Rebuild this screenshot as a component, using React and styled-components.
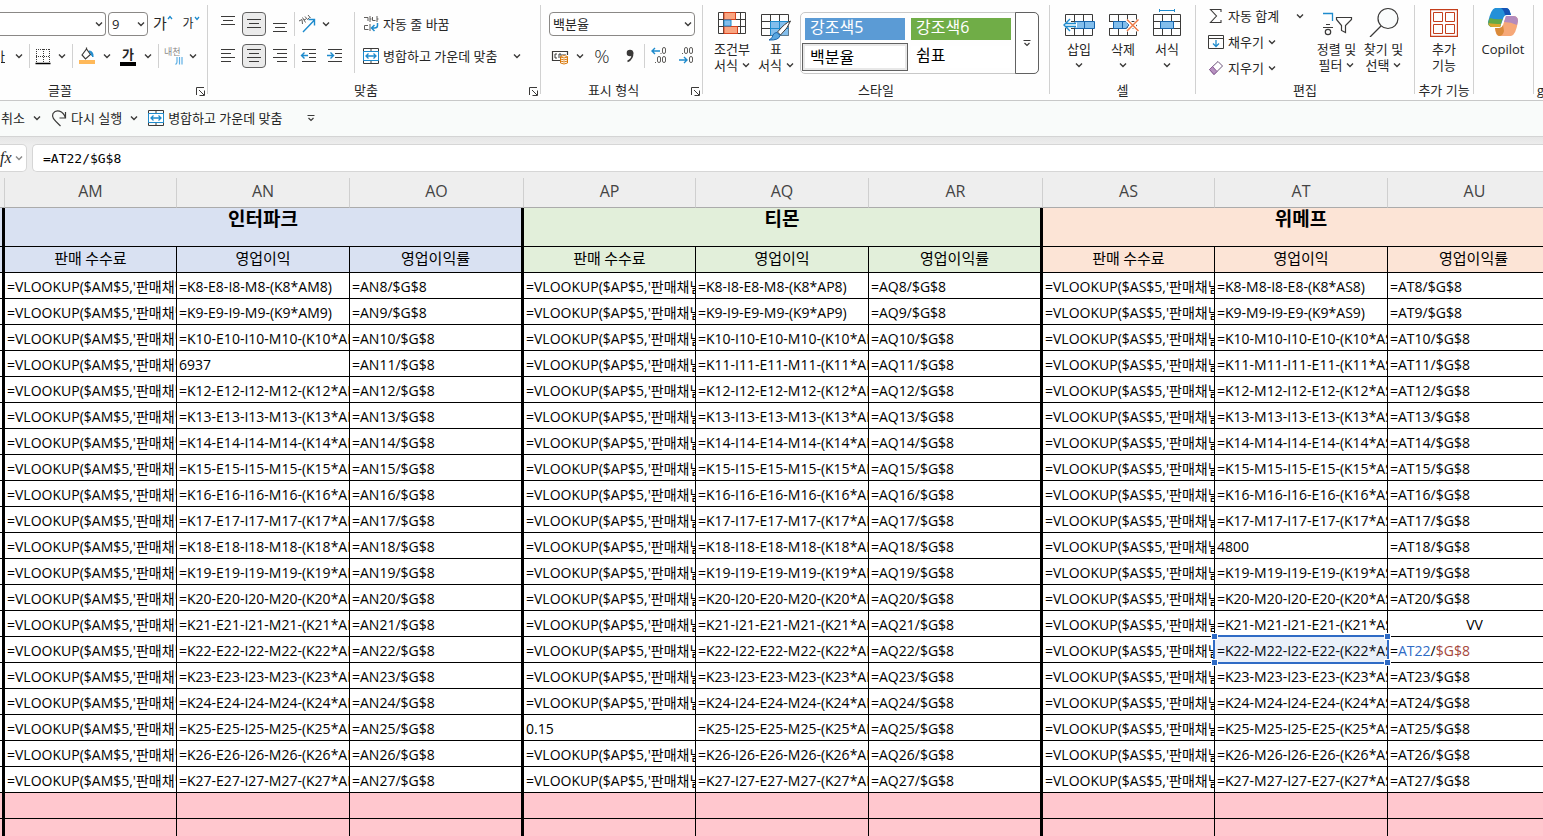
import styled, { createGlobalStyle } from 'styled-components';

const theme = {
  fonts: {
    ui: "'Open Sans', 'Noto Sans CJK KR', sans-serif",
    korean: "'Noto Sans CJK KR', sans-serif",
    mono: "'DejaVu Sans Mono', monospace",
  },
  colors: {
    ink: '#262626',
    icon: '#3b3a39',
    blue: '#1e8bcd',
    fill: '#83beec',
    line: '#c8c8c8',
    selection: '#2f6bc5',
  },
};

const GlobalStyle = createGlobalStyle`
  * {
    box-sizing: border-box;
  }

  body {
    margin: 0;
    overflow: hidden;
    background: #fff;
    color: ${theme.colors.ink};
    font-family: ${theme.fonts.ui};
    font-size: 13px;
  }

  button, input, select {
    font: inherit;
    color: inherit;
  }
`;

/* ---------- icons ---------- */

const Svg = ({ w = 20, h = 20, children }) => (
  <svg width={w} height={h} viewBox={`0 0 ${w} ${h}`} fill="none" stroke={theme.colors.icon} aria-hidden="true">
    {children}
  </svg>
);

const ChevronIcon = () => (
  <Svg w={8} h={6}>
    <path d="M1 1.5 4 4.5 7 1.5" strokeWidth="1.4" />
  </Svg>
);

const MoreIcon = () => (
  <Svg w={8} h={8}>
    <path d="M0.5 1.5h7M1.5 4 4 6.500 6.500 4" strokeWidth="1.2" />
  </Svg>
);

const LauncherIcon = () => (
  <Svg w={9} h={9}>
    <path d="M0.5 8V0.500H8M3 3 8 8M8.500 3.500V8.500H3.500" />
  </Svg>
);

const LINES = {
  top: [[3, 3, 17], [5, 7, 15], [3, 11, 17]],
  middle: [[3, 6, 17], [5, 10, 15], [3, 14, 17]],
  bottom: [[3, 10, 17], [5, 14, 15], [3, 18, 17]],
  left: [[3, 4, 17], [3, 8, 13], [3, 12, 17], [3, 16, 13]],
  center: [[3, 4, 17], [5, 8, 15], [3, 12, 17], [5, 16, 15]],
  right: [[3, 4, 17], [7, 8, 17], [3, 12, 17], [7, 16, 17]],
};

const AlignIcon = ({ kind }) => (
  <Svg>
    {LINES[kind].map(([x1, y, x2]) => (
      <path key={y} d={`M${x1} ${y - 0.5}H${x2}`} />
    ))}
  </Svg>
);

const IndentIcon = ({ out }) => (
  <Svg>
    <path d="M3 3.500H17M10 7.500H17M10 11.500H17M3 15.500H17" />
    <path
      d={out ? 'M9 9.500H3M5.500 6.500 2.500 9.500 5.500 12.500' : 'M2 9.500H8M5.500 6.500 8.500 9.500 5.500 12.500'}
      stroke={theme.colors.blue}
      strokeWidth="1.4"
    />
  </Svg>
);

const OrientationIcon = () => (
  <Svg>
    <path d="M6 18 17 6.500M11.500 5.500H17.500V11.500" stroke={theme.colors.blue} strokeWidth="1.4" />
    <path d="M2 7 5 5.500 5.500 10M5.500 3.500 8.500 8.500M7 6 9 5M8 2.500 10.500 5.500 12.500 3.500M11 1 13.500 4" stroke="#605e5c" />
  </Svg>
);

const WrapIcon = () => (
  <Svg w={16}>
    <path d="M1 3.500H5V7M7 2V8M7 5H8.500M9.500 3V6.500H12.500M14 2V8M14 5H15.500M5 11.500H1.500V15.500H5.500M7 10V17" stroke="#605e5c" />
    <path d="M14.500 9V11.500Q14.500 14 11.500 14H8.500M11.500 11 8.500 14 11.500 17" stroke={theme.colors.blue} strokeWidth="1.5" />
  </Svg>
);

const MergeIcon = () => (
  <Svg w={16} h={16}>
    <path d="M.5 .5H15.500V15.500H.5ZM.5 3.500H15.500M.5 12.500H15.500M8 .5V3.500M8 12.500V15.500" />
    <path d="M.5 3.500H15.500V12.500H.5Z" stroke={theme.colors.blue} fill="#fff" />
    <path d="M3 8H13M5.500 5.500 3 8 5.500 10.500M10.500 5.500 13 8 10.500 10.500" stroke={theme.colors.blue} strokeWidth="1.3" />
  </Svg>
);

const BorderIcon = () => (
  <Svg>
    <path d="M3 3.500H17M3 10.500H17M3.500 3V17M10.500 3V17M16.500 3V17" strokeDasharray="1 1" />
    <path d="M2.500 17.500H17.500" stroke="#000" strokeWidth="1.6" />
  </Svg>
);

const BucketIcon = () => (
  <Svg>
    <path d="M5 9 9.500 3 13.500 8.500 8.500 13ZM9.500 3V1.500" strokeWidth="1.2" />
    <path d="M12 5Q16.500 5 16 11Q14 9 14 7.500Z" fill={theme.colors.blue} stroke={theme.colors.blue} />
    <path d="M2 16H18" stroke="#ffb95a" strokeWidth="4" />
  </Svg>
);

const PhoneticIcon = () => (
  <Svg>
    <path d="M14 11V16Q14 17.500 12.500 18.500M16.500 11V18.500M19 11V18.500" stroke="#5fb0e4" strokeWidth="1.2" />
  </Svg>
);

const CurrencyIcon = () => (
  <Svg>
    <path d="M17.500 9V5.500H2.500V14.500H10" strokeWidth="1.2" />
    <path d="M7 8H5V12H7M9 8H11V10M9 8V12M13 8V9M15 8V9" />
    <path d="M10.500 10.500Q14 8.500 17.500 10.500V17Q14 19 10.500 17Z" fill="#fff" stroke="#d9790b" />
    <path d="M10.500 11Q14 13 17.500 11M10.500 13Q14 15 17.500 13M10.500 15Q14 17 17.500 15" stroke="#d9790b" />
  </Svg>
);

const CommaIcon = () => (
  <Svg>
    <circle cx="11" cy="7" r="3.300" fill={theme.colors.icon} stroke="none" />
    <path d="M13.600 6.500Q14 13 8.500 15.500" strokeWidth="1.600" />
  </Svg>
);

const DecimalIcon = ({ less }) => (
  <Svg>
    <path
      d={less ? 'M2 14H10M7 11 10 14 7 17' : 'M10 5H2M5 2 2 5 5 8'}
      stroke={theme.colors.blue}
      strokeWidth="1.4"
    />
    <g stroke="#605e5c">
      <rect x="12.500" y="1.500" width="3" height="6" rx="1.500" />
      <rect x="12.500" y="10.500" width="3" height="6" rx="1.500" />
      {less ? <rect x="7.500" y="1.500" width="3" height="6" rx="1.500" /> : <rect x="7.500" y="10.500" width="3" height="6" rx="1.500" />}
      <path d={less ? 'M5 7.500H6' : 'M5 16.500H6M10.500 7.500H11.500'} />
    </g>
  </Svg>
);

const ConditionalIcon = () => (
  <Svg w={28} h={22}>
    <path d="M.5 .5H27.500V21.500H.5ZM5.500 .5V21.500M22.500 .5V21.500M.5 7.500H27.500M.5 14.500H27.500" />
    <path d="M13 8H22V14H13Z" fill="#fff" stroke="none" />
    <path d="M6 .5H17.500V7.500H6ZM6 14.500H19.500V21.500H6Z" fill="#f9a581" stroke="#d8431f" />
    <path d="M6 8H13V14H6Z" fill="#83beec" stroke={theme.colors.blue} />
  </Svg>
);

const TableStyleIcon = () => (
  <Svg w={32} h={28}>
    <path d="M1.500 1.500H28.500V22.500H1.500ZM10.500 1.500V22.500M19.500 1.500V22.500M1.500 8.500H28.500M1.500 15.500H28.500" />
    <path d="M10.500 8.500H28.500V22.500H10.500Z" fill={theme.colors.fill} stroke="none" />
    <path d="M10.500 8.500H28.500M10.500 8.500V22.500M19.500 8.500V22.500M10.500 15.500H28.500" stroke={theme.colors.blue} />
    <path d="M30.500 8Q25 10 17.500 19L20.500 22Q28 15 30.500 8Z" fill="#fff" />
    <path d="M17 19.500 20 22.500Q19 27.500 9 27Q13 25 13 22Q14 19.500 17 19.500Z" fill="#5aa7e0" stroke="#1765ad" />
  </Svg>
);

const GridBase = ({ children }) => (
  <Svg w={34} h={28}>
    <path d="M3.500 5.500H30.500V26.500H3.500ZM12.500 5.500V26.500M21.500 5.500V26.500M3.500 12.500H30.500M3.500 19.500H30.500" />
    {children}
  </Svg>
);

const InsertIcon = () => (
  <GridBase>
    <path d="M13 12.500H32.500V19.500H13ZM22.500 12.500V19.500" fill={theme.colors.fill} stroke="#1765ad" />
    <path d="M2 16 8 10V14.500H14V17.500H8V22Z" fill="#fff" stroke="#fff" strokeWidth="2" />
    <path d="M14 14.500H4M14 17.500H4M8 10 2 16 8 22" stroke={theme.colors.blue} strokeWidth="1.400" />
  </GridBase>
);

const DeleteIcon = () => (
  <GridBase>
    <path d="M2 13H8V19H2Z" fill="#fff" stroke="none" />
    <path d="M7.500 12.500H20L23 16 20 19.500H7.500ZM16.500 12.500V19.500" fill={theme.colors.fill} stroke="#1765ad" />
    <path d="M21 11 33 22M33 11 21 22" stroke="#fff" strokeWidth="4" />
    <path d="M21 10.500 32.500 22M32.500 10.500 21 22" stroke="#ee7c49" strokeWidth="1.500" />
  </GridBase>
);

const FormatIcon = () => (
  <GridBase>
    <path d="M10.500 12.500H23.500V19.500H10.500Z" fill={theme.colors.fill} stroke="#1765ad" />
    <path d="M9.500 1.500H24.500M9.500 0V3M24.500 0V3" stroke={theme.colors.blue} />
  </GridBase>
);

const SumIcon = () => (
  <Svg w={16} h={16}>
    <path d="M13 4V1.500H2.500L8.500 8 2.500 14.500H13V12" strokeWidth="1.100" />
  </Svg>
);

const FillIcon = () => (
  <Svg w={16} h={16}>
    <path d="M.5 1.500H15.500V14.500H.5ZM.5 4.500H15.500" />
    <path d="M8 6V12.500M5 9.500 8 12.500 11 9.500" stroke={theme.colors.blue} strokeWidth="1.300" />
  </Svg>
);

const EraserIcon = () => (
  <Svg w={16} h={16}>
    <path d="M1.500 9.500 10 1.500 14.500 6 6 14.500Z" fill="#fff" stroke="#6b5379" />
    <path d="M1.500 9.500 4.500 6.500 9 11.500 6 14.500Z" fill="#b791c0" stroke="#8a5c96" />
  </Svg>
);

const SortFilterIcon = () => (
  <Svg w={32} h={28}>
    <path d="M2 4.500H11.500V12" stroke={theme.colors.blue} strokeWidth="1.300" />
    <path d="M5 15.500H9M2 18.500H12" strokeWidth="1.200" />
    <circle cx="7" cy="23" r="2.700" strokeWidth="1.200" />
    <path d="M15.500 8.500H30.500V10.500L24.500 16.500V23.500L20.500 21.500V16.500L15.500 10.500Z" strokeWidth="1.200" />
  </Svg>
);

const FindIcon = () => (
  <Svg w={32} h={30}>
    <circle cx="20" cy="11.500" r="10" strokeWidth="1.200" fill="#fafcfc" />
    <path d="M13 19 2 30" strokeWidth="1.300" />
  </Svg>
);

const AddInIcon = () => (
  <Svg w={28} h={28}>
    <g stroke="#c43e1c">
      <path d="M.5 .5H27.500V27.500H.5Z" strokeWidth="1.300" />
      <path d="M3.500 3.500H12.500V12.500H3.500ZM15.500 3.500H24.500V12.500H15.500ZM3.500 15.500H12.500V24.500H3.500ZM15.500 15.500H24.500V24.500H15.500Z" />
    </g>
  </Svg>
);

const CopilotIcon = () => (
  <Svg w={32} h={30}>
    <g stroke="none">
      <path d="M8 1H19Q22 1 23 5L24 8H20Q17 8 16 12L13 20H6Q1 20 1 15Q4 2 8 1Z" fill="#2490d8" />
      <path d="M16 1H19Q22 1 23 5L24 8H18Q17 3 14 1Z" fill="#1553b5" />
      <path d="M3 11Q9 13 15.500 12L13 20H6Q0 20 1.500 14Z" fill="#64a845" />
      <path d="M1.500 16Q6 17 14 17L13 20H6Q2 20 1.500 16Z" fill="#d9a72f" />
      <path d="M24 29H13Q9 29 8.500 24L8 21H12Q15 21 16 18L19 9H26Q31 9 31 14Q29 28 24 29Z" fill="#f6a878" />
      <path d="M19 9H26Q31 9 31 14L30 18Q24 15 17 15Z" fill="#b48bbd" />
      <path d="M8 21H12Q15 21 16 18L17 24Q16 29 12 29Q9 28 8 21Z" fill="#d98a3a" />
    </g>
  </Svg>
);

const RedoIcon = () => (
  <Svg w={16} h={18}>
    <path d="M14.500 3V9H8.500M14.500 9C12 1 5 0 2 4.500C.5 8 2 10 9.500 17" strokeWidth="1.200" />
  </Svg>
);

/* ---------- ribbon ---------- */

const Ribbon = styled.header`
  display: flex;
  height: 101px;
  padding: 5px 0 6px;
  overflow: hidden;
  border-bottom: 1px solid ${theme.colors.line};
  background: #fefefe;
`;

const GroupBox = styled.section`
  position: relative;
  display: flex;
  flex: 0 0 ${(props) => props.$width}px;
  flex-direction: column;
  justify-content: space-between;
  border-right: 1px solid #d1d1d1;
`;

const GroupBody = styled.div`
  display: flex;
  gap: ${(props) => props.$gap || 0}px;
  height: 68px;
  padding: 7px 0 0 ${(props) => props.$indent || 0}px;
`;

const GroupLabel = styled.div`
  margin-bottom: -4px;
  padding-right: ${(props) => props.$shift || 0}px;
  line-height: 16px;
  text-align: center;
  white-space: nowrap;
`;

const Launcher = styled.button`
  position: absolute;
  right: 2px;
  bottom: -2px;
  display: flex;
  padding: 0;
  border: none;
  background: none;
`;

const Group = ({ width, label, indent, gap, launcher, shift, children }) => (
  <GroupBox $width={width} aria-label={label}>
    <GroupBody $indent={indent} $gap={gap}>
      {children}
    </GroupBody>
    <GroupLabel $shift={shift}>{label}</GroupLabel>
    {launcher && (
      <Launcher aria-label={`${label} 설정`}>
        <LauncherIcon />
      </Launcher>
    )}
  </GroupBox>
);

const Rows = styled.div`
  display: flex;
  flex-direction: column;
  gap: ${(props) => (props.$tight ? 2 : 8)}px;
`;

const Row = styled.div`
  display: flex;
  flex: none;
  align-items: center;
  gap: ${(props) => props.$gap || 2}px;
  height: 24px;
`;

const Divider = styled.span`
  width: 1px;
  height: ${(props) => (props.$tall ? 61 : 24)}px;
  background: #d1d1d1;
`;

const Tool = styled.button`
  display: flex;
  flex: none;
  align-items: center;
  justify-content: center;
  gap: 4px;
  width: ${(props) => (props.$width ? `${props.$width}px` : 'auto')};
  height: 24px;
  padding: 0;
  overflow: hidden;
  border: 1px solid ${(props) => (props.$pressed ? '#616161' : 'transparent')};
  border-radius: 4px;
  background: ${(props) => (props.$pressed ? '#ebebeb' : 'none')};
  line-height: 18px;
  white-space: nowrap;

  svg {
    flex: none;
  }
`;

const Split = styled.span`
  display: flex;
  align-items: center;
  gap: 2px;
`;

const LetterTool = styled(Tool)`
  align-items: flex-start;
  gap: 0;
  font-family: ${theme.fonts.korean};
  font-size: ${(props) => props.$size}px;
  line-height: 20px;
`;

const UnderlineTool = styled(Tool)`
  justify-content: flex-end;
  padding-right: 4px;
  text-decoration: underline;
`;

const ColorTool = styled(Tool)`
  flex-direction: column;
  gap: 0;
  font-weight: bold;
  line-height: 15px;

  &::after {
    content: '';
    width: 16px;
    height: 4px;
    background: #000;
  }
`;

const PhoneticTool = styled(Tool)`
  position: relative;
  overflow: visible;
`;

const PhoneticText = styled.span`
  position: absolute;
  top: 2px;
  left: 1px;
  color: #8a8886;
  font-size: 9px;
  line-height: 10px;
`;

const PercentTool = styled(Tool)`
  font-size: 19px;
  font-weight: 300;
  line-height: 1;
`;

const SelectBox = styled.span`
  position: relative;
  display: flex;
  width: ${(props) => props.$width}px;

  svg {
    position: absolute;
    top: 9px;
    right: 3px;
    pointer-events: none;
  }
`;

const SelectField = styled.select`
  width: 100%;
  height: 24px;
  padding: 0 12px 0 3px;
  border: 1px solid #8a8886;
  border-left-width: ${(props) => (props.$cut ? 0 : 1)}px;
  border-radius: ${(props) => (props.$cut ? '0 4px 4px 0' : '4px')};
  background: #fff;
  appearance: none;
`;

const Select = ({ label, width, options, cut }) => (
  <SelectBox $width={width}>
    <SelectField aria-label={label} $cut={cut}>
      {options.map((option) => (
        <option key={option}>{option}</option>
      ))}
    </SelectField>
    <ChevronIcon />
  </SelectBox>
);

const Chevron = ({ label }) => (
  <Tool $width={14} aria-label={label}>
    <ChevronIcon />
  </Tool>
);

const BigTool = styled.button`
  display: flex;
  flex: none;
  flex-direction: column;
  align-items: center;
  width: ${(props) => props.$width || 44}px;
  padding: 0;
  border: none;
  background: none;
  line-height: 16px;
  white-space: nowrap;
`;

const BigIcon = styled.span`
  display: flex;
  align-items: flex-end;
  height: 29px;
  padding-bottom: ${(props) => props.$lift || 0}px;
  margin: ${(props) => (props.$high ? '-4px 0 4px' : '0')};
`;

const BigText = styled.span`
  display: flex;
  align-items: center;
  gap: 4px;
  min-height: 16px;
`;

const Gallery = styled.div`
  display: flex;
  width: 239px;
  height: 62px;
  margin-left: 2px;
  border: 1px solid #c8c8c8;
  border-radius: 5px;
`;

const GalleryTiles = styled.div`
  display: grid;
  flex: 1;
  grid-template-columns: 106px 100px;
  grid-template-rows: 28px 28px;
  padding: 2px 0 0 1px;
`;

const StyleTile = styled.button`
  display: flex;
  align-items: ${(props) => (props.$selected ? 'center' : 'flex-start')};
  width: ${(props) => (props.$selected ? 106 : 100)}px;
  height: ${(props) => (props.$selected ? 28 : 22)}px;
  margin: ${(props) => (props.$selected ? '0' : '3px')};
  padding: 0 ${(props) => (props.$selected ? 7 : 5)}px;
  border: ${(props) => (props.$selected ? '1px solid #616161' : 'none')};
  box-shadow: ${(props) => (props.$selected ? 'inset 0 0 0 2px #e8e8e8' : 'none')};
  background: ${(props) => props.$fill || '#fff'};
  color: ${(props) => (props.$fill ? '#fff' : '#000')};
  font-size: 16px;
  line-height: 18px;
`;

const GalleryMore = styled.button`
  display: flex;
  align-items: center;
  justify-content: center;
  width: 24px;
  margin: -1px;
  padding: 0;
  border: 1px solid #616161;
  border-radius: 0 5px 5px 0;
  background: #fff;
`;

/* ---------- quick access and formula bar ---------- */

const QuickBar = styled.nav`
  display: flex;
  align-items: center;
  height: 36px;
  padding-bottom: 1px;
  border-bottom: 1px solid #d4d4d4;
  background: #f9fbfa;
`;

const QuickItem = styled.span`
  display: flex;
  align-items: center;
  gap: 4px;
  margin-right: ${(props) => props.$after || 0}px;
`;

const FormulaBar = styled.div`
  display: flex;
  gap: 5px;
  height: 41px;
  padding: 7px 0 6px;
  background: linear-gradient(#e6e6e6, #eeeeee 8px);
`;

const FxBox = styled.button`
  display: flex;
  align-items: center;
  justify-content: space-between;
  width: 27px;
  padding: 0 3px 0 0;
  overflow: hidden;
  border: 1px solid #d6d6d6;
  border-left: none;
  border-radius: 0 5px 5px 0;
  background: #fff;
  font-family: 'Liberation Serif', serif;
  font-size: 16px;
  font-style: italic;

  svg {
    flex: none;
    opacity: 0.6;
  }
`;

const FormulaInput = styled.input`
  flex: 1;
  min-width: 0;
  padding: 0 10px;
  border: 1px solid #d6d6d6;
  border-right: none;
  border-radius: 5px 0 0 5px;
  background: #fff;
  color: #000;
  font-family: ${theme.fonts.mono};
`;

/* ---------- sheet ---------- */

const SheetArea = styled.main`
  overflow: hidden;
`;

const Sheet = styled.table`
  width: 1562px;
  border-spacing: 0;
  table-layout: fixed;
  color: #000;
`;

const Letter = styled.th`
  height: 30px;
  padding: 0 0 3px;
  border-right: 1px solid #cfcfcf;
  border-bottom: 1px solid #ababab;
  background: #eeeeee;
  color: #444;
  font-size: 16px;
  font-weight: normal;
  line-height: 22px;
`;

const GridCell = styled.td`
  height: 26px;
  padding: 0;
  border-right: ${(props) => (props.$thick ? 3 : 1)}px solid #000;
  border-bottom: 1px solid #000;
  background: ${(props) => props.$fill || '#fff'};
`;

const GroupTitle = styled(GridCell)`
  height: 39px;
  font-family: ${theme.fonts.korean};
  font-size: 19px;
  font-weight: bold;
  line-height: 20px;
  vertical-align: top;
`;

const SubTitle = styled(GridCell)`
  padding-bottom: 3px;
  font-family: ${theme.fonts.korean};
  font-size: 15px;
  font-weight: normal;
  line-height: 22px;
`;

const ValueCell = styled(GridCell)`
  position: relative;
  padding: 3px 0 0 2px;
  font-size: 14px;
  line-height: 20px;
`;

const Clip = styled.div`
  overflow: hidden;
  text-align: ${(props) => (props.$center ? 'center' : 'left')};
  white-space: nowrap;
`;

const Ref = styled.span`
  color: ${(props) => props.$color};
`;

const Outline = styled.div`
  position: absolute;
  inset: -2px;
  border: 2px solid ${theme.colors.selection};
  background: rgba(47, 107, 197, 0.1);
  z-index: 1;
`;

const Handle = styled.i`
  position: absolute;
  width: 7px;
  height: 7px;
  border: 1px solid #fff;
  background: ${theme.colors.selection};
  ${(props) => (props.$top ? 'top: -4px' : 'bottom: -4px')};
  ${(props) => (props.$left ? 'left: -4px' : 'right: -4px')};
`;

const MARKETS = [
  { name: '인터파크', fill: '#d9e1f2', cols: ['AM', 'AN', 'AO'], order: ['E', 'I', 'M'] },
  { name: '티몬', fill: '#e2efda', cols: ['AP', 'AQ', 'AR'], order: ['I', 'E', 'M'] },
  { name: '위메프', fill: '#fce4d6', cols: ['AS', 'AT', 'AU'], order: ['M', 'I', 'E'] },
];

const SUBTITLES = ['판매 수수료', '영업이익', '영업이익률'];
const WIDTHS = [5, 172, 173, 174, 172, 173, 174, 172, 173, 174];
const ROWS = Array.from({ length: 20 }, (_, i) => i + 8);
const PINK = '#ffc7ce';

const OVERRIDES = {
  AN11: '6937',
  AP25: '0.15',
  AT18: '4800',
  AU21: 'VV',
};

const formulasFor = ({ cols: [fee, profit], order }, n) => [
  `=VLOOKUP($${fee}$5,'판매채널`,
  `=K${n}-${order.map((c) => c + n).join('-')}-(K${n}*${fee}${n})`,
  `=${profit}${n}/$G$8`,
];

const CellContent = ({ id, formula }) => {
  if (id === 'AU22') {
    return (
      <Clip>
        =<Ref $color="#2f6bc5">AT22</Ref>/<Ref $color="#a5473c">$G$8</Ref>
      </Clip>
    );
  }
  return <Clip $center={id === 'AU21'}>{OVERRIDES[id] || formula}</Clip>;
};

const SheetTable = () => (
  <SheetArea>
    <Sheet>
      <colgroup>
        {WIDTHS.map((width, i) => (
          <col key={i} width={width} />
        ))}
      </colgroup>
      <thead>
        <tr>
          <Letter />
          {MARKETS.flatMap((m) => m.cols).map((c) => (
            <Letter key={c} scope="col">
              {c}
            </Letter>
          ))}
        </tr>
      </thead>
      <tbody>
        <tr>
          <GroupTitle $thick $fill="#d9e1f2" />
          {MARKETS.map((m) => (
            <GroupTitle as="th" key={m.name} colSpan={3} $thick $fill={m.fill}>
              {m.name}
            </GroupTitle>
          ))}
        </tr>
        <tr>
          <SubTitle $thick $fill="#d9e1f2" />
          {MARKETS.map((m) =>
            SUBTITLES.map((title, i) => (
              <SubTitle as="th" key={m.name + title} $thick={i === 2} $fill={m.fill}>
                {title}
              </SubTitle>
            ))
          )}
        </tr>
        {ROWS.map((n) => (
          <tr key={n}>
            <GridCell $thick />
            {MARKETS.map((m) =>
              formulasFor(m, n).map((formula, i) => {
                const id = m.cols[i] + n;
                return (
                  <ValueCell key={id} $thick={i === 2}>
                    <CellContent id={id} formula={formula} />
                    {id === 'AT22' && (
                      <Outline>
                        <Handle $top $left />
                        <Handle $top />
                        <Handle $left />
                        <Handle />
                      </Outline>
                    )}
                  </ValueCell>
                );
              })
            )}
          </tr>
        ))}
        {[28, 29].map((n) => (
          <tr key={n}>
            {WIDTHS.map((_, i) => (
              <GridCell key={i} $thick={i % 3 === 0} $fill={PINK} />
            ))}
          </tr>
        ))}
      </tbody>
    </Sheet>
  </SheetArea>
);

const FontGroup = () => (
  <Group width={208} label="글꼴" shift={87} launcher>
    <Rows>
      <Row>
        <Select label="글꼴" width={106} options={['']} cut />
        <Select label="글꼴 크기" width={40} options={['9', '10', '11']} />
        <LetterTool $width={26} $size={15} aria-label="글꼴 크기 크게">
          가
          <Svg w={6} h={10}>
            <path d="M1 6 3 3.500 5 6" stroke={theme.colors.blue} strokeWidth="1.300" />
          </Svg>
        </LetterTool>
        <LetterTool $width={26} $size={12} aria-label="글꼴 크기 작게">
          가
          <Svg w={6} h={10}>
            <path d="M1 4 3 6.500 5 4" stroke={theme.colors.blue} strokeWidth="1.300" />
          </Svg>
        </LetterTool>
      </Row>
      <Row $gap={3}>
        <Split>
          <UnderlineTool $width={10}>가</UnderlineTool>
          <Chevron label="밑줄 옵션" />
        </Split>
        <Divider />
        <Split>
          <Tool $width={20} aria-label="테두리">
            <BorderIcon />
          </Tool>
          <Chevron label="테두리 옵션" />
        </Split>
        <Divider />
        <Split>
          <Tool $width={22} aria-label="채우기 색">
            <BucketIcon />
          </Tool>
          <Chevron label="채우기 색 옵션" />
        </Split>
        <Split>
          <ColorTool $width={22}>가</ColorTool>
          <Chevron label="글꼴 색 옵션" />
        </Split>
        <Divider />
        <Split>
          <PhoneticTool $width={22}>
            <PhoneticText>내천</PhoneticText>
            <PhoneticIcon />
          </PhoneticTool>
          <Chevron label="윗주 옵션" />
        </Split>
      </Row>
    </Rows>
  </Group>
);

const AlignGroup = () => (
  <Group width={333} label="맞춤" indent={8} gap={7} shift={16} launcher>
    <Rows>
      <Row>
        <Tool $width={24} aria-label="위쪽 맞춤">
          <AlignIcon kind="top" />
        </Tool>
        <Tool $width={24} $pressed aria-label="가운데 맞춤">
          <AlignIcon kind="middle" />
        </Tool>
        <Tool $width={24} aria-label="아래쪽 맞춤">
          <AlignIcon kind="bottom" />
        </Tool>
        <Divider />
        <Split>
          <Tool $width={20} aria-label="방향">
            <OrientationIcon />
          </Tool>
          <Chevron label="방향 옵션" />
        </Split>
      </Row>
      <Row>
        <Tool $width={24} aria-label="왼쪽 맞춤">
          <AlignIcon kind="left" />
        </Tool>
        <Tool $width={24} $pressed aria-label="가로 가운데 맞춤">
          <AlignIcon kind="center" />
        </Tool>
        <Tool $width={24} aria-label="오른쪽 맞춤">
          <AlignIcon kind="right" />
        </Tool>
        <Divider />
        <Tool $width={24} aria-label="내어쓰기">
          <IndentIcon out />
        </Tool>
        <Tool $width={24} aria-label="들여쓰기">
          <IndentIcon />
        </Tool>
      </Row>
    </Rows>
    <Divider $tall />
    <Rows>
      <Row>
        <Tool>
          <WrapIcon />
          자동 줄 바꿈
        </Tool>
      </Row>
      <Row $gap={12}>
        <Tool>
          <MergeIcon />
          병합하고 가운데 맞춤
        </Tool>
        <Chevron label="병합 옵션" />
      </Row>
    </Rows>
  </Group>
);

const NumberGroup = () => (
  <Group width={162} label="표시 형식" indent={8} shift={16} launcher>
    <Rows>
      <Row>
        <Select label="표시 형식" width={146} options={['백분율', '일반', '숫자']} />
      </Row>
      <Row $gap={3}>
        <Split>
          <Tool $width={22} aria-label="회계 표시 형식">
            <CurrencyIcon />
          </Tool>
          <Chevron label="회계 표시 형식 옵션" />
        </Split>
        <PercentTool $width={24}>%</PercentTool>
        <Tool $width={24} aria-label="쉼표 스타일">
          <CommaIcon />
        </Tool>
        <Divider />
        <Tool $width={24} aria-label="자릿수 늘림">
          <DecimalIcon />
        </Tool>
        <Tool $width={24} aria-label="자릿수 줄임">
          <DecimalIcon less />
        </Tool>
      </Row>
    </Rows>
  </Group>
);

const StylesGroup = () => (
  <Group width={347} label="스타일" indent={7}>
    <BigTool>
      <BigIcon $lift={7}>
        <ConditionalIcon />
      </BigIcon>
      조건부
      <BigText>
        서식 <ChevronIcon />
      </BigText>
    </BigTool>
    <BigTool>
      <BigIcon>
        <TableStyleIcon />
      </BigIcon>
      표
      <BigText>
        서식 <ChevronIcon />
      </BigText>
    </BigTool>
    <Gallery>
      <GalleryTiles>
        <StyleTile $fill="#5b9bd5">강조색5</StyleTile>
        <StyleTile $fill="#70ad47">강조색6</StyleTile>
        <StyleTile $selected>백분율</StyleTile>
        <StyleTile>쉼표</StyleTile>
      </GalleryTiles>
      <GalleryMore aria-label="스타일 더 보기">
        <MoreIcon />
      </GalleryMore>
    </Gallery>
  </Group>
);

const CELL_TOOLS = [
  ['삽입', InsertIcon],
  ['삭제', DeleteIcon],
  ['서식', FormatIcon],
];

const CellsGroup = () => (
  <Group width={146} label="셀" indent={7}>
    {CELL_TOOLS.map(([label, Icon]) => (
      <BigTool key={label}>
        <BigIcon $high>
          <Icon />
        </BigIcon>
        {label}
        <BigText>
          <ChevronIcon />
        </BigText>
      </BigTool>
    ))}
  </Group>
);

const EditTools = styled(Rows)`
  width: 100px;
  margin: -8px 6px 0 0;
`;

const SpreadRow = styled(Row)`
  justify-content: space-between;
`;

const EditGroup = () => (
  <Group width={219} label="편집" indent={11}>
    <EditTools $tight>
      <SpreadRow>
        <Tool>
          <SumIcon />
          자동 합계
        </Tool>
        <Chevron label="자동 합계 옵션" />
      </SpreadRow>
      <Row>
        <Tool>
          <FillIcon />
          채우기 <ChevronIcon />
        </Tool>
      </Row>
      <Row>
        <Tool>
          <EraserIcon />
          지우기 <ChevronIcon />
        </Tool>
      </Row>
    </EditTools>
    <BigTool $width={47}>
      <BigIcon $high>
        <SortFilterIcon />
      </BigIcon>
      정렬 및
      <BigText>
        필터 <ChevronIcon />
      </BigText>
    </BigTool>
    <BigTool $width={47}>
      <BigIcon $high>
        <FindIcon />
      </BigIcon>
      찾기 및
      <BigText>
        선택 <ChevronIcon />
      </BigText>
    </BigTool>
  </Group>
);

const App = () => (
  <>
    <GlobalStyle />
    <Ribbon>
      <FontGroup />
      <AlignGroup />
      <NumberGroup />
      <StylesGroup />
      <CellsGroup />
      <EditGroup />
      <Group width={59} label="추가 기능" indent={7}>
        <BigTool>
          <BigIcon $high>
            <AddInIcon />
          </BigIcon>
          추가
          <BigText>기능</BigText>
        </BigTool>
      </Group>
      <Group width={60} indent={7}>
        <BigTool>
          <BigIcon $high>
            <CopilotIcon />
          </BigIcon>
          Copilot
        </BigTool>
      </Group>
      <Group width={60} label="g" shift={46} />
    </Ribbon>
    <QuickBar aria-label="빠른 실행">
      <QuickItem $after={6}>
        <Tool>취소</Tool>
        <Chevron label="취소 옵션" />
      </QuickItem>
      <QuickItem $after={6}>
        <Tool>
          <RedoIcon />
          다시 실행
        </Tool>
        <Chevron label="다시 실행 옵션" />
      </QuickItem>
      <QuickItem $after={20}>
        <Tool>
          <MergeIcon />
          병합하고 가운데 맞춤
        </Tool>
      </QuickItem>
      <Tool $width={14} aria-label="빠른 실행 도구 모음 사용자 지정">
        <MoreIcon />
      </Tool>
    </QuickBar>
    <FormulaBar>
      <FxBox aria-label="함수 삽입">
        fx
        <ChevronIcon />
      </FxBox>
      <FormulaInput aria-label="수식 입력줄" defaultValue="=AT22/$G$8" />
    </FormulaBar>
    <SheetTable />
  </>
);

export default App;
